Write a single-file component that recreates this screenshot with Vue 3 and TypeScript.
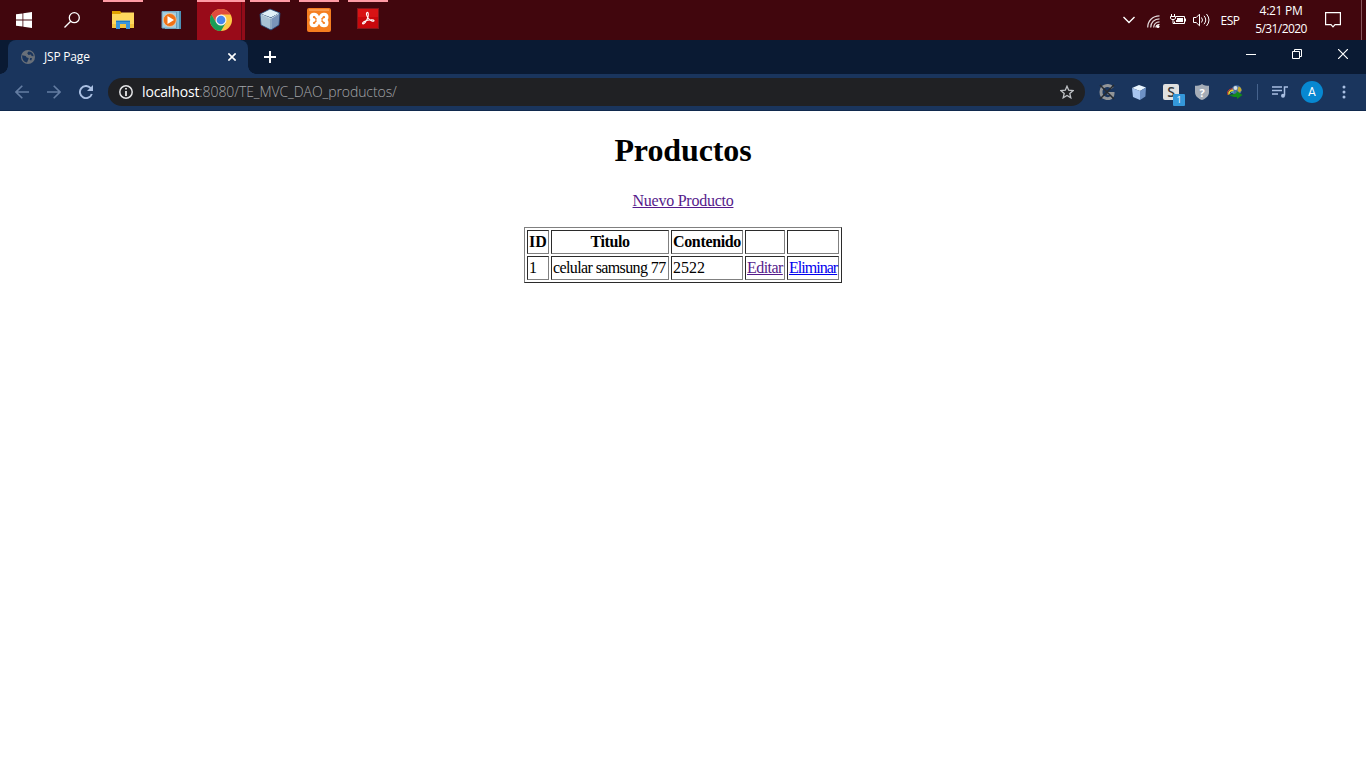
<script setup lang="ts">
interface Product {
  id: number
  title: string
  content: string
}

const products: Product[] = [{ id: 1, title: 'celular samsung 77', content: '2522' }]
</script>

<template>
  <div class="screen">
    <header class="taskbar">
      <div class="cell start">
        <svg width="16" height="16" viewBox="0 0 16 16"><path fill="#fff" d="M0 2.3 6.5 1.4V7.6H0zM7.3 1.3 16 0V7.6H7.3zM0 8.4H6.5V14.6L0 13.7zM7.3 8.4H16V16L7.3 14.7z" /></svg>
      </div>
      <div class="cell search">
        <svg width="16" height="16" viewBox="0 0 16 16" fill="none" stroke="#fff" stroke-width="1.3"><circle cx="10.3" cy="5.7" r="5" /><path d="M6.7 9.3.5 15.5" /></svg>
      </div>
      <div class="cell explorer open">
        <svg width="22" height="20" viewBox="0 0 22 20">
          <path fill="#e2a100" d="M0 1h8l2 2h12v15H0z" /><path fill="#ffd75e" d="M0 4h8l2-1.500h12V18H0z" />
          <path fill="#f4c33f" d="M0 14h22v4H0z" /><path fill="#3a96dd" d="M4 19v-8.500h14V19h-4v-5H8v5z" /><path fill="#1979ca" d="M4 11h14v1H4z" />
        </svg>
      </div>
      <div class="cell media">
        <svg width="21" height="20" viewBox="0 0 21 20">
          <path fill="#4d91b5" d="M6 1h14v18H6z" /><path fill="#83bdd9" d="M4 1h14v18H4z" /><path fill="#a6cee1" stroke="#6aa0be" d="M1 1.500 15.500 2v16.500L1 18z" />
          <circle cx="8.800" cy="10" r="6.500" fill="#f07116" stroke="#f8d1a7" stroke-width=".7" /><path fill="#fff" d="m6.500 6 6.500 4-6.500 4z" />
        </svg>
      </div>
      <div class="cell chrome open">
        <svg width="22" height="22" viewBox="0 0 22 22">
          <circle cx="11" cy="11" r="11" fill="#fdc946" />
          <path fill="#df4b3d" d="M1.470 5.500A11 11 0 0 1 20.530 5.500H11L6.240 13.750z" />
          <path fill="#199d58" d="M1.470 5.500A11 11 0 0 0 11 22L15.760 13.750 11 16.500 6.240 13.750z" />
          <circle cx="11" cy="11" r="5.500" fill="#f4f4f4" /><circle cx="11" cy="11" r="4.300" fill="#4688ed" />
        </svg>
      </div>
      <div class="cell cube open">
        <svg width="22" height="24" viewBox="0 0 22 24" stroke="#214778" stroke-width=".8" stroke-linejoin="round">
          <path fill="#dff0f7" d="m11 1 10 4-9 5-11-4z" /><path fill="#a9c3d5" d="m1 6 11 4v12L2 17z" /><path fill="#7994b9" d="m12 10 9-5-1 12-8 5z" />
          <path stroke="#eaf6fa" fill="none" d="m2 6.500 10 4 8-5M12 10.500V21" />
        </svg>
      </div>
      <div class="cell xampp open">
        <svg width="24" height="24" viewBox="0 0 24 24">
          <rect width="24" height="24" rx="2" fill="#f57e20" /><path fill="#fa9c50" d="M2 1h20v2H2z" />
          <path fill="none" stroke="#fff" stroke-width="3.400" stroke-linecap="round" stroke-linejoin="round" d="M10 8.500C9.500 5.600 4.200 5.500 4.200 9c0 1.800 1.300 2.800 2.600 3-1.300.2-2.600 1.200-2.600 3 0 3.500 5.300 3.400 5.800.5M14 8.500c.5-2.900 5.800-3 5.800.5 0 1.800-1.300 2.800-2.600 3 1.300.2 2.600 1.200 2.600 3 0 3.500-5.300 3.400-5.800.5" /><path fill="none" stroke="#fff" stroke-width="2.800" d="M9.500 12h5M10 8l1.500 2h1L14 8M10 16l1.500-2h1l1.500 2" />
        </svg>
      </div>
      <div class="cell pdf open">
        <svg width="22" height="22" viewBox="0 0 22 22">
          <rect x=".5" y=".5" width="21" height="20" fill="#c8080c" stroke="#85161a" /><path fill="#d81315" d="M1 1h20v8H1z" />
          <path fill="none" stroke="#fff" stroke-width="1.100" d="M10 4.500c1.600-1 1.500 3 .8 5-1.300 4-3.800 7-5 6.300s1.600-2.900 4.800-3.600c3-.7 6.500-.7 6.400.5-.2 1.300-3.700.3-5.500-2.200C10 8.500 9 5.500 10 4.500" />
        </svg>
      </div>
      <div class="tray">
        <div class="t24"><svg width="12" height="8" viewBox="0 0 12 8" fill="none" stroke="#fff" stroke-width="1.400"><path d="m.5 1 5.500 5.500L11.500 1" /></svg></div>
        <div class="t25 wifi"><svg width="13" height="13" viewBox="0 0 13 13" fill="none" stroke="#e3d8da" stroke-width="1.200"><path d="M.7 12.500C.7 6 5.500.8 12.500.8M3.700 12.500c0-5 3.600-8.700 8.800-8.700M6.700 12.500c0-3.400 2.400-5.700 5.800-5.700" /><path stroke="#fff" d="M9 12.500c0-1.600 1.500-3 3.500-3" /><circle cx="11" cy="11.500" r="1.500" fill="#fff" stroke="none" /></svg></div>
        <div class="t23"><svg width="16" height="12" viewBox="0 0 16 12" fill="none" stroke="#fff"><path d="M6 2.500h8.500v7h-10v-2M15.500 4.500v3" /><path fill="#fff" stroke="none" d="M7 4h6v4H6V6h1z" /><path d="M1.500 0v2M4.500 0v2M.5 2.500h5v2l-1.500 1h-2l-1.500-1zM3 5v4.500h2" /></svg></div>
        <div class="t24"><svg width="17" height="14" viewBox="0 0 17 14" fill="none" stroke="#fff"><path d="M.5 4.500h2.700L6.500 1.200v11.600L3.200 9.500H.500z" /><path d="M8.500 4.500q2 2.500 0 5M11 2.800q3.500 4.200 0 8.400M13.500 1q5 6 0 12" /></svg></div>
        <div class="lang"><span>ESP</span></div>
        <div class="clock"><span>4:21 PM</span><span class="date">5/31/2020</span></div>
        <div class="notice"><svg width="16" height="16" viewBox="0 0 16 16" fill="none" stroke="#fff" stroke-width="1.200"><path d="M.6 .6h14.800v12H10L8 14.800 6 12.600H.6z" /></svg></div>
        <div class="desktop-edge"></div>
      </div>
    </header>

    <div class="tabstrip">
      <div class="tab">
        <svg class="globe" width="14" height="14" viewBox="0 0 14 14"><circle cx="7" cy="7" r="7" fill="#697079" /><path fill="#1a355d" d="M1.200 5.200 4.700 6l1 1.500 2 .5-.4 1.600L6 12.500C3 12 .8 9.500 1.200 5.200zM7.500 1.500 6.200 3.300 7.500 5 10 4.500l.5 1.600 2.200.2C12.500 3.500 10.300 1.500 7.500 1.500zM9 8h2l-.7 2.500L8.800 10z" /></svg>
        <span class="tab-title">JSP Page</span>
        <svg class="tab-close" width="8" height="8" viewBox="0 0 8 8" stroke="#fff" stroke-width="1.600"><path d="m.4.4 7.200 7.200M7.600.4.4 7.600" /></svg>
      </div>
      <div class="newtab"><svg width="12" height="12" viewBox="0 0 12 12" stroke="#fff" stroke-width="2"><path d="M6 0v12M0 6h12" /></svg></div>
      <div class="window-buttons">
        <div><svg width="10" height="10" viewBox="0 0 10 10" stroke="#fff"><path d="M0 5.500h10" /></svg></div>
        <div><svg width="10" height="10" viewBox="0 0 10 10" fill="none" stroke="#fff"><path d="M.5 2.500h7v7h-7zM2.500 2.500v-2h7v7h-2" /></svg></div>
        <div><svg width="10" height="10" viewBox="0 0 10 10" stroke="#fff" stroke-width="1.200"><path d="m0 0 10 10M10 0 0 10" /></svg></div>
      </div>
    </div>

    <nav class="toolbar">
      <div class="nav-buttons">
        <div><svg width="14" height="14" viewBox="0 0 14 14" fill="none" stroke="#647da2" stroke-width="1.600"><path d="M14 7H1M7.300.7 1 7l6.300 6.300" /></svg></div>
        <div><svg width="14" height="14" viewBox="0 0 14 14" fill="none" stroke="#647da2" stroke-width="1.600"><path d="M0 7h13M6.700.7 13 7l-6.300 6.300" /></svg></div>
        <div><svg width="14" height="14" viewBox="0 0 14 14"><path fill="none" stroke="#a9bfe2" stroke-width="1.900" d="M12.800 9A6.100 6.100 0 1 1 11.500 2.900L13 4.500" /><path fill="#a9bfe2" d="M14 0v6H8z" /></svg></div>
      </div>
      <div class="omnibox">
        <svg width="14" height="14" viewBox="0 0 14 14"><circle cx="7" cy="7" r="6.200" fill="none" stroke="#e3e4e6" stroke-width="1.500" /><path fill="#fff" d="M6.200 3h1.600v1.600H6.200zM6.200 6h1.600v5H6.200z" /></svg>
        <span class="url"><b>localhost</b>:8080/TE_MVC_DAO_productos/</span>
        <svg class="star" width="14" height="14" viewBox="0 0 14 14" fill="none" stroke="#bfc2c6" stroke-width="1.300"><path d="m7 1.200 1.700 4 4.400.4-3.300 2.900 1 4.300L7 10.500l-3.800 2.300 1-4.300L.9 5.600l4.400-.4z" /></svg>
      </div>
      <div class="extensions">
        <div class="ext-g"><svg width="16" height="16" viewBox="0 0 16 16" fill="none"><path stroke="#929598" stroke-width="3" d="M13.500 4C10-.5 2 1.500 2 8s8 8.500 11 4.500c.8-1 1-2.500 1-3H8.500" /><path stroke="#272b30" stroke-width="1.500" d="m1 1 14 14M15 1 1 15" /></svg></div>
        <div class="ext-cube"><svg width="14" height="15" viewBox="0 0 14 15"><path fill="#eaf6ff" d="m7 0 7 2.500L8 6 0 3z" /><path fill="#a8c5ef" d="m0 3 8 3v9l-7-3z" /><path fill="#6d91c5" d="m8 6 6-3.500-.6 9L8 15z" /></svg></div>
        <div class="ext-s"><span class="s-tile">S</span><span class="count">1</span></div>
        <div class="ext-shield"><svg width="14" height="16" viewBox="0 0 14 16"><path fill="#a5adb8" d="M7 0c2 1.500 4.500 1.700 7 1.700V8c0 4-3 6.500-7 8-4-1.500-7-4-7-8V1.700C2.500 1.700 5 1.500 7 0" /></svg><span>?</span></div>
        <div class="ext-idm"><svg width="16" height="14" viewBox="0 0 16 14"><circle cx="9.500" cy="5.200" r="5" fill="#4a6fa4" /><circle cx="8.500" cy="3" r="2" fill="#d5dfe3" /><path fill="#c3a92d" d="M11.500 1.500c2 .5 3 2 3 4l-2 2-2-2z" /><path fill="none" stroke="#d9392d" d="M1 10C-.5 5.500 3 3.500 6 4" /><path fill="none" stroke="#f5d925" stroke-width="1.600" d="M2 9.500C1.500 6.500 4 5 6.500 5.500" /><path fill="none" stroke="#4fb6c4" d="M3.500 8.500q1-2 3.500-1.500" /><path fill="#128b19" d="m9.500 6 6 4-5.500 4v-2c-4 0-6-.5-8-2.500 2.500.5 4.500 0 7.500-1.500z" /></svg></div>
        <div class="divider"></div>
        <div class="ext-music"><svg width="16" height="12" viewBox="0 0 16 12" fill="none" stroke="#a9bfe2" stroke-width="1.500"><path d="M0 1h10M0 4.500h10M0 8h6M12.500 9.500V1H16" /><circle cx="11" cy="9.700" r="2" fill="#a9bfe2" stroke="none" /></svg></div>
        <div class="profile"><span>A</span></div>
        <div class="menu"><svg width="4" height="14" viewBox="0 0 4 14" fill="#a9bfe2"><circle cx="2" cy="2" r="1.500" /><circle cx="2" cy="7" r="1.500" /><circle cx="2" cy="12" r="1.500" /></svg></div>
      </div>
    </nav>

    <main class="page">
      <h1>Productos</h1>
      <a class="new-link visited">Nuevo Producto</a>
      <table>
        <colgroup><col class="c1" /><col class="c2" /><col class="c3" /><col class="c4" /><col class="c5" /></colgroup>
        <thead><tr><th>ID</th><th class="h-title">Titulo</th><th class="h-content">Contenido</th><th></th><th></th></tr></thead>
        <tbody>
          <tr v-for="p in products" :key="p.id">
            <td>{{ p.id }}</td><td class="title">{{ p.title }}</td><td>{{ p.content }}</td><td><a class="visited edit">Editar</a></td><td><a class="remove">Eliminar</a></td>
          </tr>
        </tbody>
      </table>
    </main>
  </div>
</template>

<style>
body { margin: 0; background: #fff; overflow: hidden; }
</style>

<style scoped>
* { box-sizing: border-box; }
svg { display: block; flex: none; }
.screen { width: 1366px; height: 768px; overflow: hidden; background: #fff; display: flex; flex-direction: column; font-family: "Open Sans", "Noto Sans", sans-serif; }
.taskbar { height: 40px; flex: none; display: flex; background: #41060d; color: #fff; }
.cell { display: flex; align-items: center; justify-content: center; position: relative; flex: none; }
.start, .search { width: 48px; }
.explorer { width: 54px; }
.media { width: 42px; margin-right: 5px; }
.chrome { width: 48px; background: linear-gradient(90deg, #990b19 0 44px, #620914 44px 45px, #920c19 45px); }
.cube { width: 50px; }
.xampp { width: 48px; }
.pdf { width: 50px; }
.open::before { content: ""; position: absolute; top: 0; left: calc(50% - 20px); width: 40px; height: 2px; background: #ff9ba5; }
.chrome::before { left: 0; width: 48px; }
.pdf svg { margin-top: -2px; }
.tray { margin-left: auto; display: flex; align-items: stretch; width: 249px; }
.tray > div { display: flex; align-items: center; justify-content: center; flex: none; }
.t24 { width: 24px; }
.t25 { width: 25px; }
.t23 { width: 23px; }
.wifi { padding-top: 2px; }
.lang { width: 34px; font-size: 12px; letter-spacing: -0.5px; }
.tray .clock { width: 68px; flex-direction: column; font-size: 12px; line-height: 18px; letter-spacing: -0.3px; }
.date { letter-spacing: -0.6px; }
.notice { width: 36px; }
.desktop-edge { width: 1px; margin-left: 10px; background: #86545b; }
.tabstrip { height: 34px; flex: none; background: #0a1a33; display: flex; }
.tab { width: 240px; margin-left: 8px; background: #1a355d; border-radius: 8px 8px 0 0; display: flex; align-items: center; padding: 0 12px 0 13px; color: #fff; position: relative; }
.tab::before, .tab::after { content: ""; position: absolute; width: 8px; height: 8px; bottom: 0; }
.tab::before { left: -8px; background: radial-gradient(circle at 0 0, #0a1a33 7.5px, #1a355d 8px); }
.tab::after { right: -8px; background: radial-gradient(circle at 100% 0, #0a1a33 7.5px, #1a355d 8px); }
.tab-title { margin-left: 9px; font-size: 12px; line-height: 16px; letter-spacing: -0.2px; padding-bottom: 1px; }
.tab-close { margin-left: auto; }
.newtab { width: 44px; display: flex; align-items: center; justify-content: center; }
.window-buttons { display: flex; margin-left: auto; height: 28px; }
.window-buttons > div { width: 46px; display: flex; align-items: center; justify-content: center; }
.toolbar { height: 37px; flex: none; background: #1a355d; border-bottom: 1px solid #10294d; display: flex; align-items: center; }
.nav-buttons { display: flex; width: 108px; padding-left: 6px; }
.nav-buttons > div { width: 32px; display: flex; justify-content: center; }
.omnibox { width: 977px; height: 28px; background: #202124; border-radius: 14px; display: flex; align-items: center; padding: 0 11px; }
.url { font-family: "Open Sans", sans-serif; font-size: 14px; line-height: 18px; padding-bottom: 1px; font-weight: 300; color: #a4a6aa; margin-left: 9px; letter-spacing: -0.08px; white-space: nowrap; }
.url b { color: #fff; font-weight: 400; letter-spacing: -0.15px; }
.star { margin-left: auto; }
.extensions { display: flex; height: 36px; flex: 1; padding-left: 6px; }
.extensions > div { width: 32px; flex: none; display: flex; align-items: center; justify-content: center; position: relative; }
.s-tile { width: 16px; height: 16px; border-radius: 2px; background: #e0e0df; color: #35383a; font-size: 14px; font-weight: 600; line-height: 16px; text-align: center; }
.count { position: absolute; right: 2px; bottom: 4px; width: 12px; height: 12px; border-radius: 1px; background: #3498db; color: #fff; font: 9px/12px "Open Sans", sans-serif; text-align: center; }
.extensions > .ext-shield { padding-right: 2px; }
.ext-shield span { position: absolute; font-size: 11px; font-weight: 700; color: #fff; }
.extensions > .divider { width: 1px; height: 16px; margin: 10px 6px 0; background: #46638d; }
.extensions > .ext-music { width: 32px; }
.profile span { width: 22px; height: 22px; border-radius: 50%; background: #0788d1; color: #fff; font: 12px/22px Roboto, sans-serif; text-align: center; }
.page { flex: 1; display: flex; flex-direction: column; align-items: center; font: 16px/20px "Liberation Serif", serif; color: #000; }
h1 { margin: 20px 0 0; font-size: 32px; line-height: 38px; letter-spacing: -0.1px; }
.new-link { margin-top: 22px; letter-spacing: -0.25px; }
a { color: #0000ee; text-decoration: underline; white-space: nowrap; }
a.visited { color: #551a8b; }
table { width: 318px; height: 56px; margin-top: 16px; table-layout: fixed; border-collapse: separate; border-spacing: 2px; border: 1px solid; border-color: #808080 #2b2b2b #2b2b2b #808080; }
.c1 { width: 22px; }
.c2 { width: 118px; }
.c3 { width: 72px; }
.c4 { width: 40px; }
.c5 { width: 52px; }
th, td { height: 24px; padding: 1px; border: 1px solid; border-color: #2b2b2b #808080 #808080 #2b2b2b; line-height: 20px; white-space: nowrap; }
td { text-align: left; }
.h-title { letter-spacing: -0.4px; }
.h-content { letter-spacing: -0.35px; }
.title { letter-spacing: -0.61px; }
.edit { letter-spacing: -0.55px; }
.remove { letter-spacing: -0.98px; }
</style>
